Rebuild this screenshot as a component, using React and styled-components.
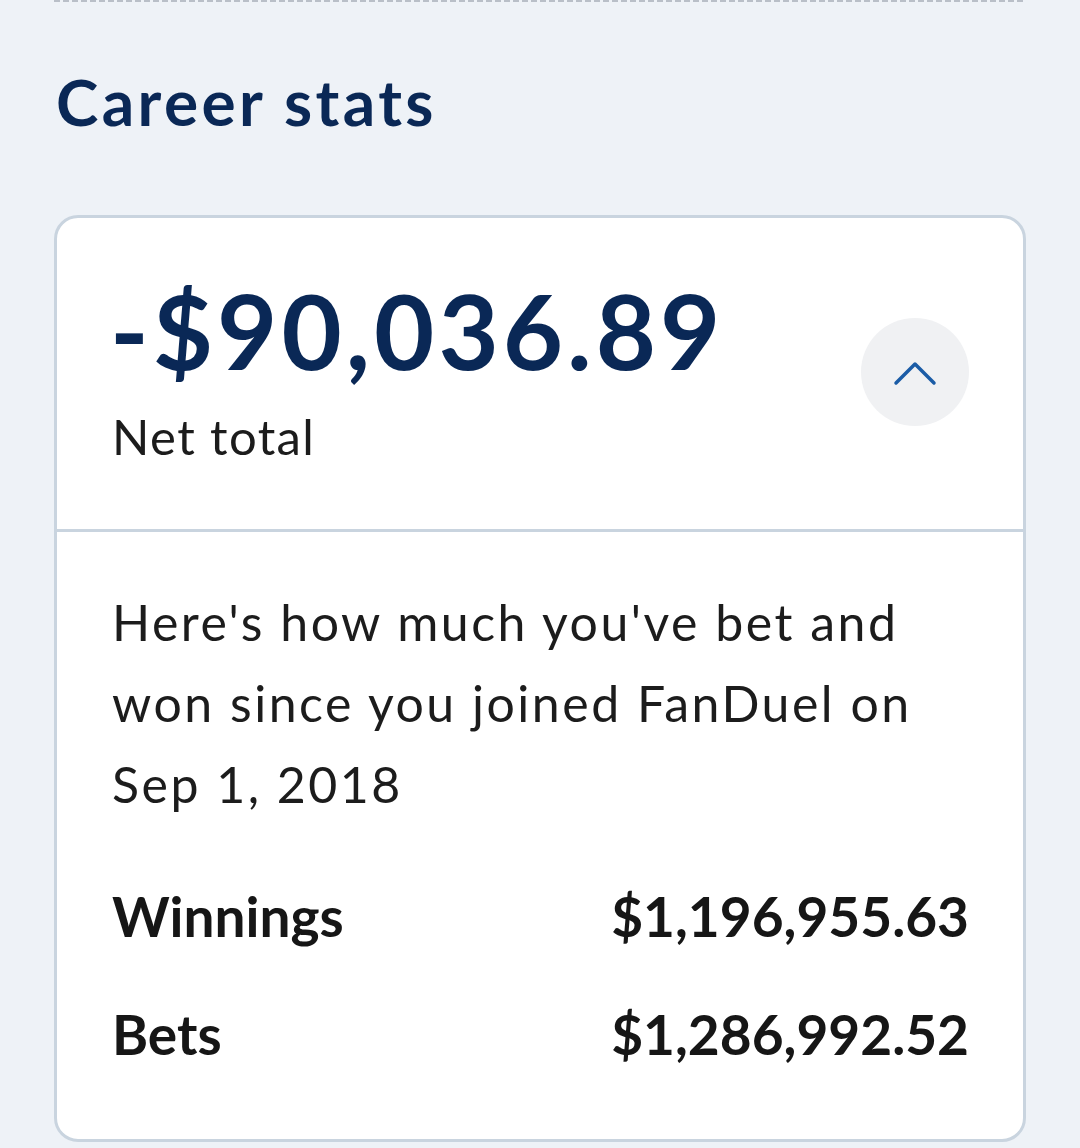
import styled, { createGlobalStyle } from "styled-components";

const GlobalStyle = createGlobalStyle`
  html, body {
    margin: 0;
    padding: 0;
    background: #eef2f7;
  }
  body {
    font-family: Lato, "Open Sans", sans-serif;
    -webkit-font-smoothing: antialiased;
  }
`;

const Page = styled.div`
  box-sizing: border-box;
  min-height: 1148px;
  padding: 0 54px;
  background: #eef2f7;
`;

const DashedRule = styled.div`
  height: 2px;
  background: repeating-linear-gradient(
    to right,
    #b9bfc8 0,
    #b9bfc8 6px,
    transparent 6px,
    transparent 9px
  );
`;

const Title = styled.h2`
  margin: 60px 0 73px 2px;
  font-size: 64px;
  line-height: 80px;
  font-weight: 700;
  letter-spacing: 3.4px;
  color: #0a2856;
`;

const Card = styled.section`
  background: #ffffff;
  border: 3px solid #c9d4df;
  border-radius: 24px;
  overflow: hidden;
`;

const Summary = styled.div`
  display: flex;
  align-items: center;
  justify-content: space-between;
  padding: 60px 54px 63px 55px;
  border-bottom: 3px solid #c9d4df;
`;

const Amount = styled.div`
  margin-left: -2px;
  font-size: 104px;
  line-height: 104px;
  font-weight: 700;
  letter-spacing: 4px;
  color: #0a2856;
`;

const AmountLabel = styled.div`
  margin-top: 24px;
  font-size: 49px;
  line-height: 60px;
  letter-spacing: 1.4px;
  color: #1c1c1c;
`;

const ToggleButton = styled.button`
  flex: none;
  width: 108px;
  height: 108px;
  border: none;
  border-radius: 50%;
  background: #f0f1f3;
  display: flex;
  align-items: center;
  justify-content: center;
  padding: 0;
  cursor: pointer;
`;

const Details = styled.div`
  padding: 50px 54px 73px 55px;
`;

const Blurb = styled.p`
  margin: 0 0 59px;
  font-size: 50px;
  line-height: 81px;
  letter-spacing: 2.5px;
  color: #1c1c1c;
`;

const StatRows = styled.div`
  display: flex;
  flex-direction: column;
  gap: 54px;
`;

const StatRow = styled.div`
  display: flex;
  justify-content: space-between;
  font-size: 55px;
  line-height: 64px;
  font-weight: 700;
  color: #161616;
`;

const ChevronUp = () => (
  <svg width="44" height="28" viewBox="0 0 44 28" fill="none">
    <path
      d="M3 25 L22 6 L41 25"
      stroke="#1b5ca6"
      strokeWidth="3.5"
      strokeLinecap="round"
      strokeLinejoin="round"
    />
  </svg>
);

const stats = [
  { label: "Winnings", value: "$1,196,955.63" },
  { label: "Bets", value: "$1,286,992.52" },
];

export default function App() {
  return (
    <>
      <GlobalStyle />
      <Page>
        <DashedRule />
        <Title>Career stats</Title>
        <Card>
          <Summary>
            <div>
              <Amount>-$90,036.89</Amount>
              <AmountLabel>Net total</AmountLabel>
            </div>
            <ToggleButton aria-label="Collapse">
              <ChevronUp />
            </ToggleButton>
          </Summary>
          <Details>
            <Blurb>
              Here's how much you've bet and won since you joined FanDuel on
              Sep 1, 2018
            </Blurb>
            <StatRows>
              {stats.map((s) => (
                <StatRow key={s.label}>
                  <span>{s.label}</span>
                  <span>{s.value}</span>
                </StatRow>
              ))}
            </StatRows>
          </Details>
        </Card>
      </Page>
    </>
  );
}
